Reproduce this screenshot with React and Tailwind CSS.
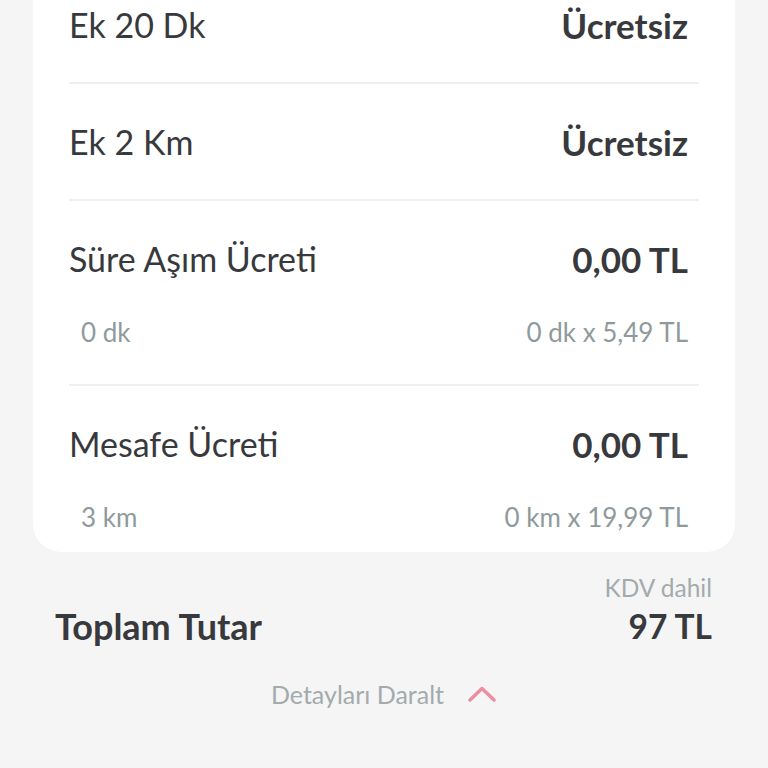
import React from 'react';

const rows = [
  { label: 'Ek 20 Dk', value: 'Ücretsiz' },
  { label: 'Ek 2 Km', value: 'Ücretsiz' },
];

const detailRows = [
  { label: 'Süre Aşım Ücreti', value: '0,00 TL', left: '0 dk', right: '0 dk x 5,49 TL', pb: 'pb-[36px]', border: true },
  { label: 'Mesafe Ücreti', value: '0,00 TL', left: '3 km', right: '0 km x 19,99 TL', pb: 'pb-[19px]', border: false },
];

export default function App() {
  return (
    <div className="min-h-screen bg-[#f5f5f5] overflow-hidden font-['Lato',sans-serif]">
      {/* Price card */}
      <div className="mx-[33px] -mt-[33px] bg-white rounded-[28px] px-[36px]">
        {rows.map((r) => (
          <div key={r.label} className="h-[117px] flex items-center justify-between border-b-2 border-[#efefef]">
            <span className="text-[34px] leading-[40px] text-[#38393d]">{r.label}</span>
            <span className="pr-[11px] text-[35px] leading-[40px] font-bold text-[#38393d]">{r.value}</span>
          </div>
        ))}

        {detailRows.map((r) => (
          <div
            key={r.label}
            className={`pt-[38px] ${r.pb} ${r.border ? 'border-b-2 border-[#efefef]' : ''}`}
          >
            <div className="flex items-center justify-between">
              <span className="text-[34px] leading-[40px] text-[#38393d]">{r.label}</span>
              <span className="pr-[11px] text-[35px] leading-[40px] font-bold text-[#38393d]">{r.value}</span>
            </div>
            <div className="mt-[37px] flex items-center justify-between pl-[12px] pr-[11px]">
              <span className="text-[26px] leading-[32px] text-[#8f9a9c]">{r.left}</span>
              <span className="text-[26px] leading-[32px] text-[#8f9a9c]">{r.right}</span>
            </div>
          </div>
        ))}
      </div>

      {/* Total */}
      <div className="mt-[22px] pl-[55px] pr-[56px] flex items-end justify-between">
        <span className="text-[36px] leading-[40px] font-bold text-[#38393d]">Toplam Tutar</span>
        <div className="flex flex-col items-end gap-[4px]">
          <span className="text-[24.5px] leading-[28px] text-[#a3abad]">KDV dahil</span>
          <span className="text-[33.5px] leading-[40px] font-bold text-[#38393d]">97 TL</span>
        </div>
      </div>

      {/* Collapse */}
      <div className="mt-[34px] flex items-center justify-center gap-[23px]">
        <span className="text-[25px] leading-[28px] text-[#a3abad]">Detayları Daralt</span>
        <svg width="30" height="18" viewBox="0 0 30 18" fill="none">
          <path d="M3 15 L15 3.5 L27 15" stroke="#ea8ea2" strokeWidth="3.5" strokeLinecap="round" strokeLinejoin="round" />
        </svg>
      </div>
    </div>
  );
}
